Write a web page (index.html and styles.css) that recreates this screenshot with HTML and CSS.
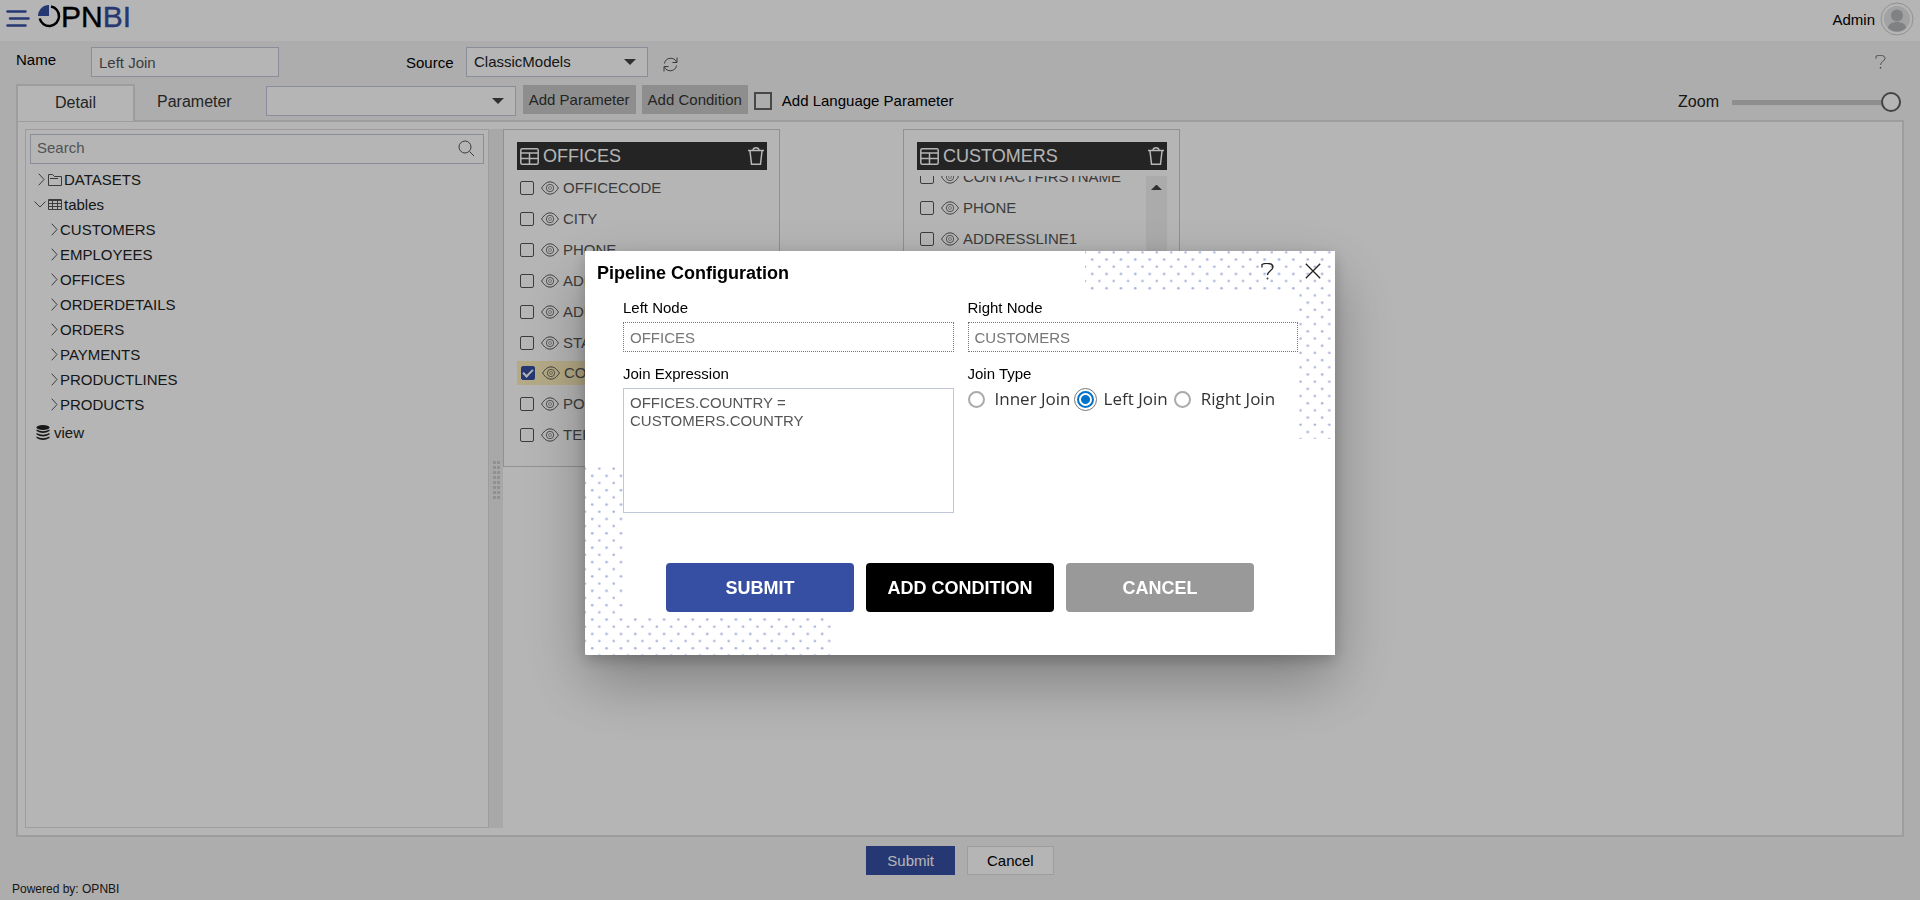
FILE: index.html
```html
<!DOCTYPE html>
<html lang="en">
<head>
<meta charset="utf-8">
<title>OPNBI - Left Join</title>
<link rel="stylesheet" href="styles.css">
</head>
<body>
<svg class="sprite" aria-hidden="true">
  <symbol id="eye" viewBox="0 0 18 14"><path d="M.6 7C3.500 2.500 6 .9 9 .9s5.500 1.600 8.400 6.100C14.500 11.500 12 13.100 9 13.100S3.500 11.500 .6 7z"/><circle cx="9" cy="7" r="3.700" stroke-width=".8"/><circle cx="9" cy="7" r="1.500" stroke-width=".5"/></symbol>
  <symbol id="right" viewBox="0 0 7 13"><path d="M.7.7l5.300 5.800L.7 12.300"/></symbol>
  <symbol id="grid" viewBox="0 0 19 17"><rect x=".8" y=".8" width="17.400" height="15.400" rx="1.500"/><path d="M1 5h17M1 10.500h17M9.500 5.500V16"/></symbol>
  <symbol id="trash" viewBox="0 0 16 19"><path d="M0 3.500h16M5 3C5.500 0 10.500 0 11 3M2 4l1.500 13.200h9L14 4"/></symbol>
  <symbol id="help" viewBox="0 0 13 17"><path d="M1 4.500V1.500C4-.2 12-.3 12 4c0 3.500-5.500 4-5.500 8"/><circle class="dot" cx="6.500" cy="15.500" r="1"/></symbol>
</svg>
<div class="app">
  <header class="topbar">
    <button class="plain" type="button" aria-label="Menu">
      <svg class="burger" width="24" height="20" viewBox="0 0 24 20"><path d="M1.500 2.500h18M4 9.500h18.500M1.500 16.500h18"/></svg>
    </button>
    <a class="logo" href="#">
      <svg width="23" height="23" viewBox="0 0 23 23"><path fill="#364fa3" d="M11 0v11H0A11 11 0 0 1 11 0z"/><path fill="none" stroke="#000" stroke-width="2.500" d="M13 1.500A9.800 9.800 0 1 1 1.700 13.500"/></svg>
      <span>PN<b>BI</b></span>
    </a>
    <span class="user">Admin</span>
    <svg class="avatar" width="34" height="34" viewBox="0 0 34 34"><circle cx="17" cy="17" r="16" fill="#fff" stroke="#ccc"/><circle cx="17" cy="17" r="13" fill="#e3e5e7"/><circle cx="17" cy="13.500" r="6" fill="#b4b6b9"/><path fill="#b4b6b9" d="M8 26c0-8 18-8 18 0a13 13 0 0 1-18 0z"/></svg>
  </header>

  <div class="toolbar">
    <label class="name-label" for="name">Name</label>
    <input class="field name-field" id="name" type="text" value="Left Join">
    <label class="source-label" for="source">Source</label>
    <div class="picker source">
      <select class="field" id="source"><option>ClassicModels</option></select>
      <i class="arrow"></i>
    </div>
    <button class="plain refresh" type="button" aria-label="Refresh">
      <svg class="line" width="15" height="15" viewBox="0 0 15 15"><path d="M1.500 6.500C2.300 0 11.500-.5 13.500 5M14 .5V5.500H9.500M13.500 8.500C12.700 15 3.500 15.500 1.500 10M1 14.500V9.500H5.500"/></svg>
    </button>
    <button class="plain page-help" type="button" aria-label="Help"><svg class="line" width="11" height="14"><use href="#help"/></svg></button>
  </div>

  <div class="tabs">
    <button class="tab active" type="button">Detail</button>
    <button class="tab" type="button">Parameter</button>
    <div class="picker param">
      <select class="field" aria-label="Parameter list"><option></option></select>
      <i class="arrow"></i>
    </div>
    <button class="grey" type="button">Add Parameter</button>
    <button class="grey" type="button">Add Condition</button>
    <input class="lang" id="lang" type="checkbox">
    <label for="lang">Add Language Parameter</label>
    <label class="zoom-label" for="zoom">Zoom</label>
    <input class="zoom" id="zoom" type="range" min="0" max="100" value="100">
  </div>

  <main class="panel">
    <aside class="sidebar">
      <div class="search">
        <input type="text" aria-label="Search" placeholder="Search">
        <svg class="line" width="17" height="17" viewBox="0 0 17 17"><circle cx="7" cy="7" r="6"/><path d="M11.500 11.500l4.500 4.500"/></svg>
      </div>
      <ul class="tree">
        <li><svg class="line chevron" width="7" height="13"><use href="#right"/></svg><svg class="line" width="14" height="13" viewBox="0 0 14 13"><path d="M.5 12V1.500h4L6.500 3.500h7v9H.5zM2 5.500h7M9 5.500h1"/></svg>DATASETS</li>
        <li><svg class="line" width="12" height="7" viewBox="0 0 12 7"><path d="M.5.5L6 6 11.500.5"/></svg><svg class="line" width="14" height="11" viewBox="0 0 14 11"><path stroke-width="2" d="M.5 1h13"/><path d="M.5.5v10h13V.5M.5 4.500h13M.5 7.500h13M4.500 1v9.500M9.500 1v9.500"/></svg>tables</li>
        <li class="child"><svg class="line" width="7" height="13"><use href="#right"/></svg>CUSTOMERS</li>
        <li class="child"><svg class="line" width="7" height="13"><use href="#right"/></svg>EMPLOYEES</li>
        <li class="child"><svg class="line" width="7" height="13"><use href="#right"/></svg>OFFICES</li>
        <li class="child"><svg class="line" width="7" height="13"><use href="#right"/></svg>ORDERDETAILS</li>
        <li class="child"><svg class="line" width="7" height="13"><use href="#right"/></svg>ORDERS</li>
        <li class="child"><svg class="line" width="7" height="13"><use href="#right"/></svg>PAYMENTS</li>
        <li class="child"><svg class="line" width="7" height="13"><use href="#right"/></svg>PRODUCTLINES</li>
        <li class="child"><svg class="line" width="7" height="13"><use href="#right"/></svg>PRODUCTS</li>
        <li class="view"><svg width="14" height="16" viewBox="0 0 14 16" fill="#222"><ellipse cx="7" cy="2.500" rx="6.500" ry="2.500"/><path d="M.5 4.500q6.500 3.500 13 0v1.500q-6.500 4-13 0zM.5 8q6.500 3.500 13 0v1.500q-6.500 4-13 0zM.5 11.500q6.500 3.500 13 0v1.500q-6.500 4-13 0z"/></svg>view</li>
      </ul>
    </aside>
    <div class="splitter"><i class="grip"></i></div>
    <section class="canvas">
      <article class="node offices">
        <h2><svg width="19" height="17"><use href="#grid"/></svg>OFFICES<button class="plain" type="button" aria-label="Delete OFFICES"><svg width="16" height="19"><use href="#trash"/></svg></button></h2>
        <div class="columns">
          <label><input type="checkbox"><svg class="line" width="18" height="14"><use href="#eye"/></svg>OFFICECODE</label>
          <label><input type="checkbox"><svg class="line" width="18" height="14"><use href="#eye"/></svg>CITY</label>
          <label><input type="checkbox"><svg class="line" width="18" height="14"><use href="#eye"/></svg>PHONE</label>
          <label><input type="checkbox"><svg class="line" width="18" height="14"><use href="#eye"/></svg>ADDRESSLINE1</label>
          <label><input type="checkbox"><svg class="line" width="18" height="14"><use href="#eye"/></svg>ADDRESSLINE2</label>
          <label><input type="checkbox"><svg class="line" width="18" height="14"><use href="#eye"/></svg>STATE</label>
          <label class="picked"><input type="checkbox" checked><svg class="line" width="18" height="14"><use href="#eye"/></svg>COUNTRY</label>
          <label><input type="checkbox"><svg class="line" width="18" height="14"><use href="#eye"/></svg>POSTALCODE</label>
          <label><input type="checkbox"><svg class="line" width="18" height="14"><use href="#eye"/></svg>TERRITORY</label>
        </div>
      </article>
      <article class="node customers">
        <h2><svg width="19" height="17"><use href="#grid"/></svg>CUSTOMERS<button class="plain" type="button" aria-label="Delete CUSTOMERS"><svg width="16" height="19"><use href="#trash"/></svg></button></h2>
        <div class="scroller">
          <div class="columns">
            <label><input type="checkbox"><svg class="line" width="18" height="14"><use href="#eye"/></svg>CONTACTFIRSTNAME</label>
            <label><input type="checkbox"><svg class="line" width="18" height="14"><use href="#eye"/></svg>PHONE</label>
            <label><input type="checkbox"><svg class="line" width="18" height="14"><use href="#eye"/></svg>ADDRESSLINE1</label>
          </div>
          <div class="scrollbar"><i></i></div>
        </div>
      </article>
    </section>
  </main>

  <div class="actions">
    <button class="primary" type="button">Submit</button>
    <button class="secondary" type="button">Cancel</button>
  </div>
  <footer>Powered by: OPNBI</footer>
</div>

<div class="overlay">
  <form class="dialog" role="dialog" aria-labelledby="dialog-title">
    <svg class="dots top" width="250" height="188"><pattern id="dots-a" x="-3.6" y="-2.3" width="14.370" height="14.370" patternUnits="userSpaceOnUse"><circle cx="3.600" cy="3.600" r="1.300"/><circle cx="10.800" cy="10.800" r="1.300"/></pattern><path fill="url(#dots-a)" d="M0 0h250v188h-37V40H0z"/></svg>
    <svg class="dots bottom" width="250" height="189"><pattern id="dots-b" x="-3.6" y="-1" width="14.370" height="14.370" patternUnits="userSpaceOnUse"><circle cx="3.600" cy="3.600" r="1.300"/><circle cx="10.800" cy="10.800" r="1.300"/></pattern><path fill="url(#dots-b)" d="M0 0h38v151h210v38H0z"/></svg>
    <div class="dialog-head">
      <h1 id="dialog-title">Pipeline Configuration</h1>
      <button class="plain" type="button" aria-label="Help"><svg width="13" height="17"><use href="#help"/></svg></button>
      <button class="plain" type="button" aria-label="Close"><svg width="16" height="16" viewBox="0 0 16 16"><path d="M.8.8l14.400 14.400M15.200.8L.8 15.200"/></svg></button>
    </div>
    <div class="grid">
      <div class="cell">
        <label for="left-node">Left Node</label>
        <input class="node-name" id="left-node" type="text" value="OFFICES" disabled>
      </div>
      <div class="cell">
        <label for="right-node">Right Node</label>
        <input class="node-name" id="right-node" type="text" value="CUSTOMERS" disabled>
      </div>
      <div class="cell">
        <label for="expression">Join Expression</label>
        <textarea id="expression">OFFICES.COUNTRY =
CUSTOMERS.COUNTRY</textarea>
      </div>
      <fieldset class="cell">
        <legend>Join Type</legend>
        <div class="radios">
          <label><input type="radio" name="join">Inner Join</label>
          <label><input type="radio" name="join" checked>Left Join</label>
          <label><input type="radio" name="join">Right Join</label>
        </div>
      </fieldset>
    </div>
    <div class="dialog-actions">
      <button class="submit" type="button">SUBMIT</button>
      <button class="condition" type="button">ADD CONDITION</button>
      <button class="cancel" type="button">CANCEL</button>
    </div>
  </form>
</div>
</body>
</html>
```

FILE: styles.css
```css
* { box-sizing: border-box; }

body {
  margin: 0;
  background: #f4f4f4;
  color: #000;
  font: 15px/18px "Liberation Sans", Arial, sans-serif;
}

button, input, select, textarea { margin: 0; font: inherit; color: inherit; border-radius: 0; }
.sprite { position: absolute; width: 0; height: 0; }
.plain { display: flex; padding: 0; border: 0; background: none; }
.line { fill: none; stroke: #555; stroke-width: 1; }
.dot { fill: #444; stroke: none; }

.app { display: flex; flex-direction: column; min-height: 100vh; isolation: isolate; }

/* Top bar */
.topbar { display: flex; align-items: flex-start; height: 41px; padding: 2px 6px 0 6px; background: #fff; }
.topbar > .plain { margin-top: 7px; }
.burger { fill: none; stroke: #364fa3; stroke-width: 2.5; stroke-linecap: round; }
.logo { display: flex; margin: 3px auto 0 8px; color: #000; text-decoration: none; font-size: 30px; line-height: 23px; -webkit-text-stroke: .4px; }
.logo b { color: #364fa3; font-weight: 400; }
.user { margin: 9px 5px 0 0; }

/* Name and source */
.toolbar { display: flex; height: 43px; padding: 6px 34px 0 16px; }
.field { height: 30px; border: 1px solid #c2c9da; background: #fff; padding: 0 7px; color: #555; }
.name-label { width: 75px; margin-top: 4px; }
.name-field { width: 188px; }
.source-label { width: 60px; margin: 7px 0 0 127px; }
.picker { display: grid; }
.picker > * { grid-area: 1 / 1; }
.picker .field { appearance: none; width: 100%; color: #222; }
.arrow { justify-self: end; align-self: center; margin-right: 12px; border: solid transparent; border-width: 6px 6px 0; border-top-color: #444; pointer-events: none; }
.source { width: 182px; height: 30px; }
.refresh { margin: 10px 0 0 15px; align-self: flex-start; }
.page-help { margin: 8px 0 0 auto; align-self: flex-start; }

/* Tabs */
.tabs { display: flex; height: 36px; padding: 0 19px 0 16px; }
.tab { position: relative; z-index: 1; height: 35px; padding: 0 22px; border: 0; background: none; font-size: 16px; color: #333; }
.tab.active { width: 119px; height: 37px; padding: 0 0 2px; border: 2px solid #ddd; border-bottom: 0; background: #fff; }
.param { width: 250px; height: 30px; margin: 2px 7px 0 12px; }
.grey { height: 29px; margin: 1px 6px 0 0; padding: 0 6px; border: 0; background: #c9c9c9; color: #333; }
.lang { appearance: none; width: 18px; height: 18px; margin: 8px 10px 0 0; border: 2px solid #666; }
.lang + label { margin-top: 8px; }
.zoom-label { margin: 9px 13px 0 auto; font-size: 16px; color: #222; }
.zoom { appearance: none; width: 169px; height: 20px; margin-top: 8px; background: linear-gradient(#c9c9c9, #c9c9c9) no-repeat center / 100% 5px; }
.zoom::-webkit-slider-thumb { appearance: none; width: 20px; height: 20px; border: 2px solid #606060; border-radius: 50%; background: #fff; }

/* Work area */
.panel { display: flex; flex: 1; margin: 0 16px; padding: 7px; border: 2px solid #ddd; background: #fff; }
.sidebar { width: 464px; padding: 4px; border: 1px solid #ddd; }
.search { display: flex; align-items: center; height: 30px; padding: 0 8px 2px 6px; border: 1px solid #c2c9da; }
.search input { flex: 1; border: 0; padding: 0; background: none; outline: 0; }
.search input::placeholder { color: #757575; opacity: 1; }
.tree { margin: 0; padding: 3px 0 0 4px; list-style: none; color: #222; }
.tree li { display: flex; align-items: center; gap: 2px; height: 25px; }
.tree .chevron { margin: 0 1px 0 4px; }
.tree .child { padding-left: 17px; }
.tree .view { gap: 4px; height: 32px; padding-left: 2px; }
.splitter { display: flex; align-items: center; justify-content: center; width: 14px; background: #ededed; }
.grip { width: 7px; height: 40px; background: repeating-linear-gradient(#ededed 0 2px, transparent 2px 5px), linear-gradient(90deg, #ccc 3px, transparent 3px 4px, #ccc 4px); }
.canvas { position: relative; flex: 1; }
.node { position: absolute; top: 0; width: 277px; height: 338px; padding: 12px; border: 1px solid #ccc; color: #555; }
.offices { left: 0; }
.customers { left: 400px; }
.node h2 { display: flex; align-items: center; gap: 4px; height: 28px; margin: 0 0 0 1px; padding: 0 3px; background: #333; color: #fff; font-size: 18px; font-weight: 400; }
.node h2 svg { fill: none; stroke: #fff; stroke-width: 1.5; }
.node h2 .plain { margin-left: auto; }
.columns { padding-top: 2px; }
.columns label { display: flex; align-items: center; height: 31px; padding-left: 4px; }
.columns svg { margin: 0 4px 0 7px; }
.columns input { appearance: none; width: 14px; height: 14px; border: 1px solid #555; border-radius: 2px; }
.columns .picked { height: 24px; margin: 3px 0 3px 1px; background: #fff0bd; }
.columns input:checked { display: grid; place-content: center; border-color: #364fa3; background: #364fa3; }
.columns input:checked::before { content: ""; width: 8px; height: 4px; margin-bottom: 2px; border: solid #fff; border-width: 0 0 2px 2px; rotate: -45deg; }
.scroller { display: flex; height: 264px; margin-top: 6px; overflow: hidden; }
.scroller .columns { flex: 1; margin-top: -17px; }
.scrollbar { width: 21px; padding: 9px 5px; background: #f1f1f1; }
.scrollbar i { display: block; border: solid transparent; border-width: 0 5px 5px; border-bottom-color: #444; }

/* Page actions */
.actions { display: flex; justify-content: center; gap: 12px; padding: 9px 0 3px; }
.actions button { height: 29px; border: 1px solid #ddd; padding: 0 19px; background: #fff; }
.actions .primary { padding: 0 20px; border-color: #364fa3; background: #364fa3; color: #fff; }
footer { height: 22px; padding-left: 12px; font-size: 12px; line-height: 22px; color: #222; }

/* Dialog */
.overlay { position: fixed; inset: 0; display: grid; place-content: center; padding-top: 6px; background: rgba(0, 0, 0, .29); }
.dialog { position: relative; width: 750px; padding-bottom: 43px; background: #fff; box-shadow: 0 26px 58px rgba(0, 0, 0, .3), 0 5px 14px rgba(0, 0, 0, .2); }
.dialog > div { position: relative; }
.dots { position: absolute; fill: #aab4dc; }
.top { top: 0; right: 0; }
.bottom { bottom: 0; left: 0; }
.dialog-head { display: flex; align-items: flex-start; gap: 31px; padding: 12px 14px 0 12px; }
.dialog-head h1 { margin: 0 auto 0 0; font-size: 18px; line-height: 20px; }
.dialog-head svg { fill: none; stroke: #222; stroke-width: 1.3; }
.grid { display: grid; grid-template-columns: 1fr 1fr; gap: 13px 14px; padding: 16px 37px 0 38px; }
.cell { display: flex; flex-direction: column; gap: 5px; min-width: 0; margin: 0; padding: 0; border: 0; }
.cell legend { padding: 0; margin-bottom: 4px; }
.node-name { height: 30px; padding: 0 6px; border: 1px dotted #767676; background: #fff; color: #767676; }
textarea { height: 125px; padding: 5px 6px; border: 1px solid #c0c8d8; resize: none; color: #555; }
.radios { display: flex; gap: 6px; font: 17px/24px "Open Sans", "Noto Sans", sans-serif; color: #333; }
.radios label { display: flex; align-items: center; gap: 10px; }
.radios input { appearance: none; width: 17px; height: 17px; border: 2px solid #aaa; border-radius: 50%; }
.radios input:checked { border-color: #0072c9; background: radial-gradient(#0072c9 4px, #fff 5px); outline: 1px solid #777; outline-offset: 2px; }
.dialog-actions { display: flex; justify-content: center; gap: 12px; padding-top: 50px; }
.dialog-actions button { width: 188px; height: 49px; padding: 0; border: 0; border-radius: 4px; color: #fff; font-size: 18px; font-weight: 700; }
.submit { background: #364fa3; }
.condition { background: #000; }
.cancel { background: #999; }
```
